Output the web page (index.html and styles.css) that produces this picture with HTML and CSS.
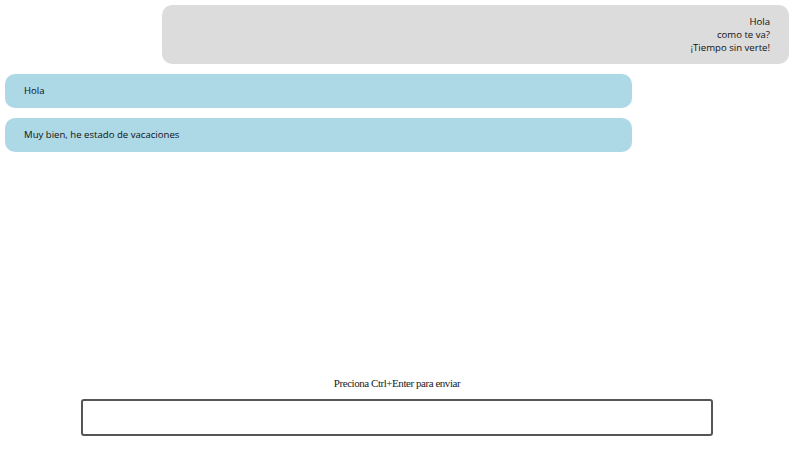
FILE: index.html
```html
<!DOCTYPE html>
<html lang="es">
<head>
<meta charset="utf-8">
<title>Chat</title>
<link rel="stylesheet" href="styles.css">
</head>
<body>
<div class="app">
  <div class="messages">
    <div class="bubble mine">Hola<br>como te va?<br>¡Tiempo sin verte!</div>
    <div class="bubble theirs">Hola</div>
    <div class="bubble theirs">Muy bien, he estado de vacaciones</div>
  </div>
  <div class="composer">
    <div class="hint">Preciona Ctrl+Enter para enviar</div>
    <textarea class="input"></textarea>
  </div>
</div>
</body>
</html>
```
FILE: styles.css
```css
html, body {
  margin: 0;
  padding: 0;
  background: #fff;
}
.app {
  box-sizing: border-box;
  height: 450px;
  width: 794px;
  padding: 5px 5px 14px 5px;
  display: flex;
  flex-direction: column;
}
.messages {
  flex: 1;
  display: flex;
  flex-direction: column;
  gap: 10px;
}
.bubble {
  box-sizing: border-box;
  width: 80%;
  padding: 10px 19px;
  border-radius: 10px;
  font-family: "Open Sans", "Noto Sans", sans-serif;
  font-size: 9.6px;
  line-height: 13px;
  color: #111;
}
.bubble.mine {
  margin-left: auto;
  background: #dcdcdc;
  text-align: right;
}
.bubble.theirs {
  background: #add8e6;
  padding: 10px 19px 11px;
}
.composer {
  display: flex;
  flex-direction: column;
  align-items: center;
}
.hint {
  font-family: "Liberation Serif", serif;
  font-size: 11px;
  letter-spacing: -0.45px;
  line-height: 14px;
  color: #222;
  margin-bottom: 9px;
}
.input {
  box-sizing: content-box;
  width: 80%;
  height: 33px;
  margin: 0;
  padding: 0;
  border: 2px solid #555;
  border-radius: 3px;
  resize: none;
  display: block;
}
```
